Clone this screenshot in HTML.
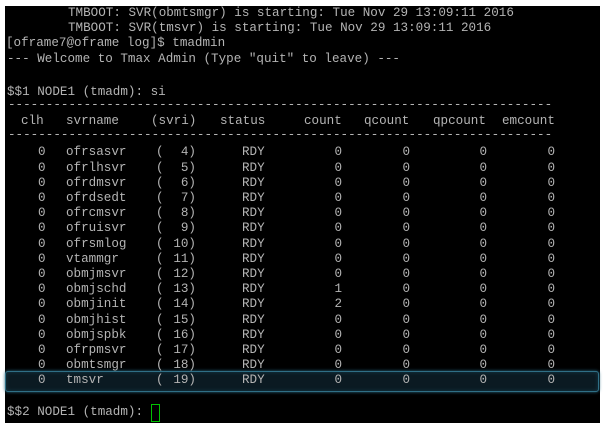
<!DOCTYPE html>
<html><head><meta charset="utf-8"><style>
html,body{margin:0;padding:0;background:#fff;width:606px;height:428px;overflow:hidden}
#t{position:absolute;left:5px;top:6px;width:595px;height:417px;background:#000}
.l{position:absolute;font-family:"Liberation Mono","Courier New",monospace;font-size:12.6px;line-height:14px;color:#b4b4b4;white-space:pre}
.c{line-height:15.2px;top:145.4px}
.r{text-align:right}
#hl{position:absolute;left:5px;top:371px;width:592px;height:19px;background:#0b1a22;border:1px solid #2f6f86;border-radius:3px;box-shadow:0 0 3px #2a6a80, inset 0 0 4px #163a48}
#cur{position:absolute;left:151px;top:404px;width:7px;height:16px;border:1px solid #00c000}
</style></head><body>
<div id="t"></div>
<div id="hl"></div>
<div class="l" style="left:68px;top:6px">TMBOOT: SVR(obmtsmgr) is starting: Tue Nov 29 13:09:11 2016</div>
<div class="l" style="left:68px;top:21px">TMBOOT: SVR(tmsvr) is starting: Tue Nov 29 13:09:11 2016</div>
<div class="l" style="left:6px;top:36px">[oframe7@oframe log]$ tmadmin</div>
<div class="l" style="left:7px;top:52px">--- Welcome to Tmax Admin (Type "quit" to leave) ---</div>
<div class="l" style="left:7px;top:85px">$$1 NODE1 (tmadm): si</div>
<div class="l" style="left:8px;top:98px">------------------------------------------------------------------------</div>
<div class="l" style="left:21px;top:114px">clh</div>
<div class="l" style="left:66px;top:114px">svrname</div>
<div class="l" style="left:151px;top:114px">(svri)</div>
<div class="l" style="left:220px;top:114px">status</div>
<div class="l" style="left:304px;top:114px">count</div>
<div class="l" style="left:364px;top:114px">qcount</div>
<div class="l" style="left:433px;top:114px">qpcount</div>
<div class="l" style="left:502px;top:114px">emcount</div>
<div class="l" style="left:8px;top:128px">------------------------------------------------------------------------</div>

<div class="l c" style="left:38px">0
0
0
0
0
0
0
0
0
0
0
0
0
0
0
0</div>
<div class="l c" style="left:66px">ofrsasvr
ofrlhsvr
ofrdmsvr
ofrdsedt
ofrcmsvr
ofruisvr
ofrsmlog
vtammgr
obmjmsvr
obmjschd
obmjinit
obmjhist
obmjspbk
ofrpmsvr
obmtsmgr
tmsvr</div>
<div class="l c" style="left:156px">(
(
(
(
(
(
(
(
(
(
(
(
(
(
(
(</div>
<div class="l c r" style="left:160px;width:36px"> 4)
 5)
 6)
 7)
 8)
 9)
10)
11)
12)
13)
14)
15)
16)
17)
18)
19)</div>
<div class="l c" style="left:242px">RDY
RDY
RDY
RDY
RDY
RDY
RDY
RDY
RDY
RDY
RDY
RDY
RDY
RDY
RDY
RDY</div>
<div class="l c r" style="left:300px;width:42px">0
0
0
0
0
0
0
0
0
1
2
0
0
0
0
0</div>
<div class="l c r" style="left:368px;width:42px">0
0
0
0
0
0
0
0
0
0
0
0
0
0
0
0</div>
<div class="l c r" style="left:445px;width:42px">0
0
0
0
0
0
0
0
0
0
0
0
0
0
0
0</div>
<div class="l c r" style="left:513px;width:42px">0
0
0
0
0
0
0
0
0
0
0
0
0
0
0
0</div>

<div class="l" style="left:7px;top:405px">$$2 NODE1 (tmadm): </div>
<div id="cur"></div>
</body></html>
